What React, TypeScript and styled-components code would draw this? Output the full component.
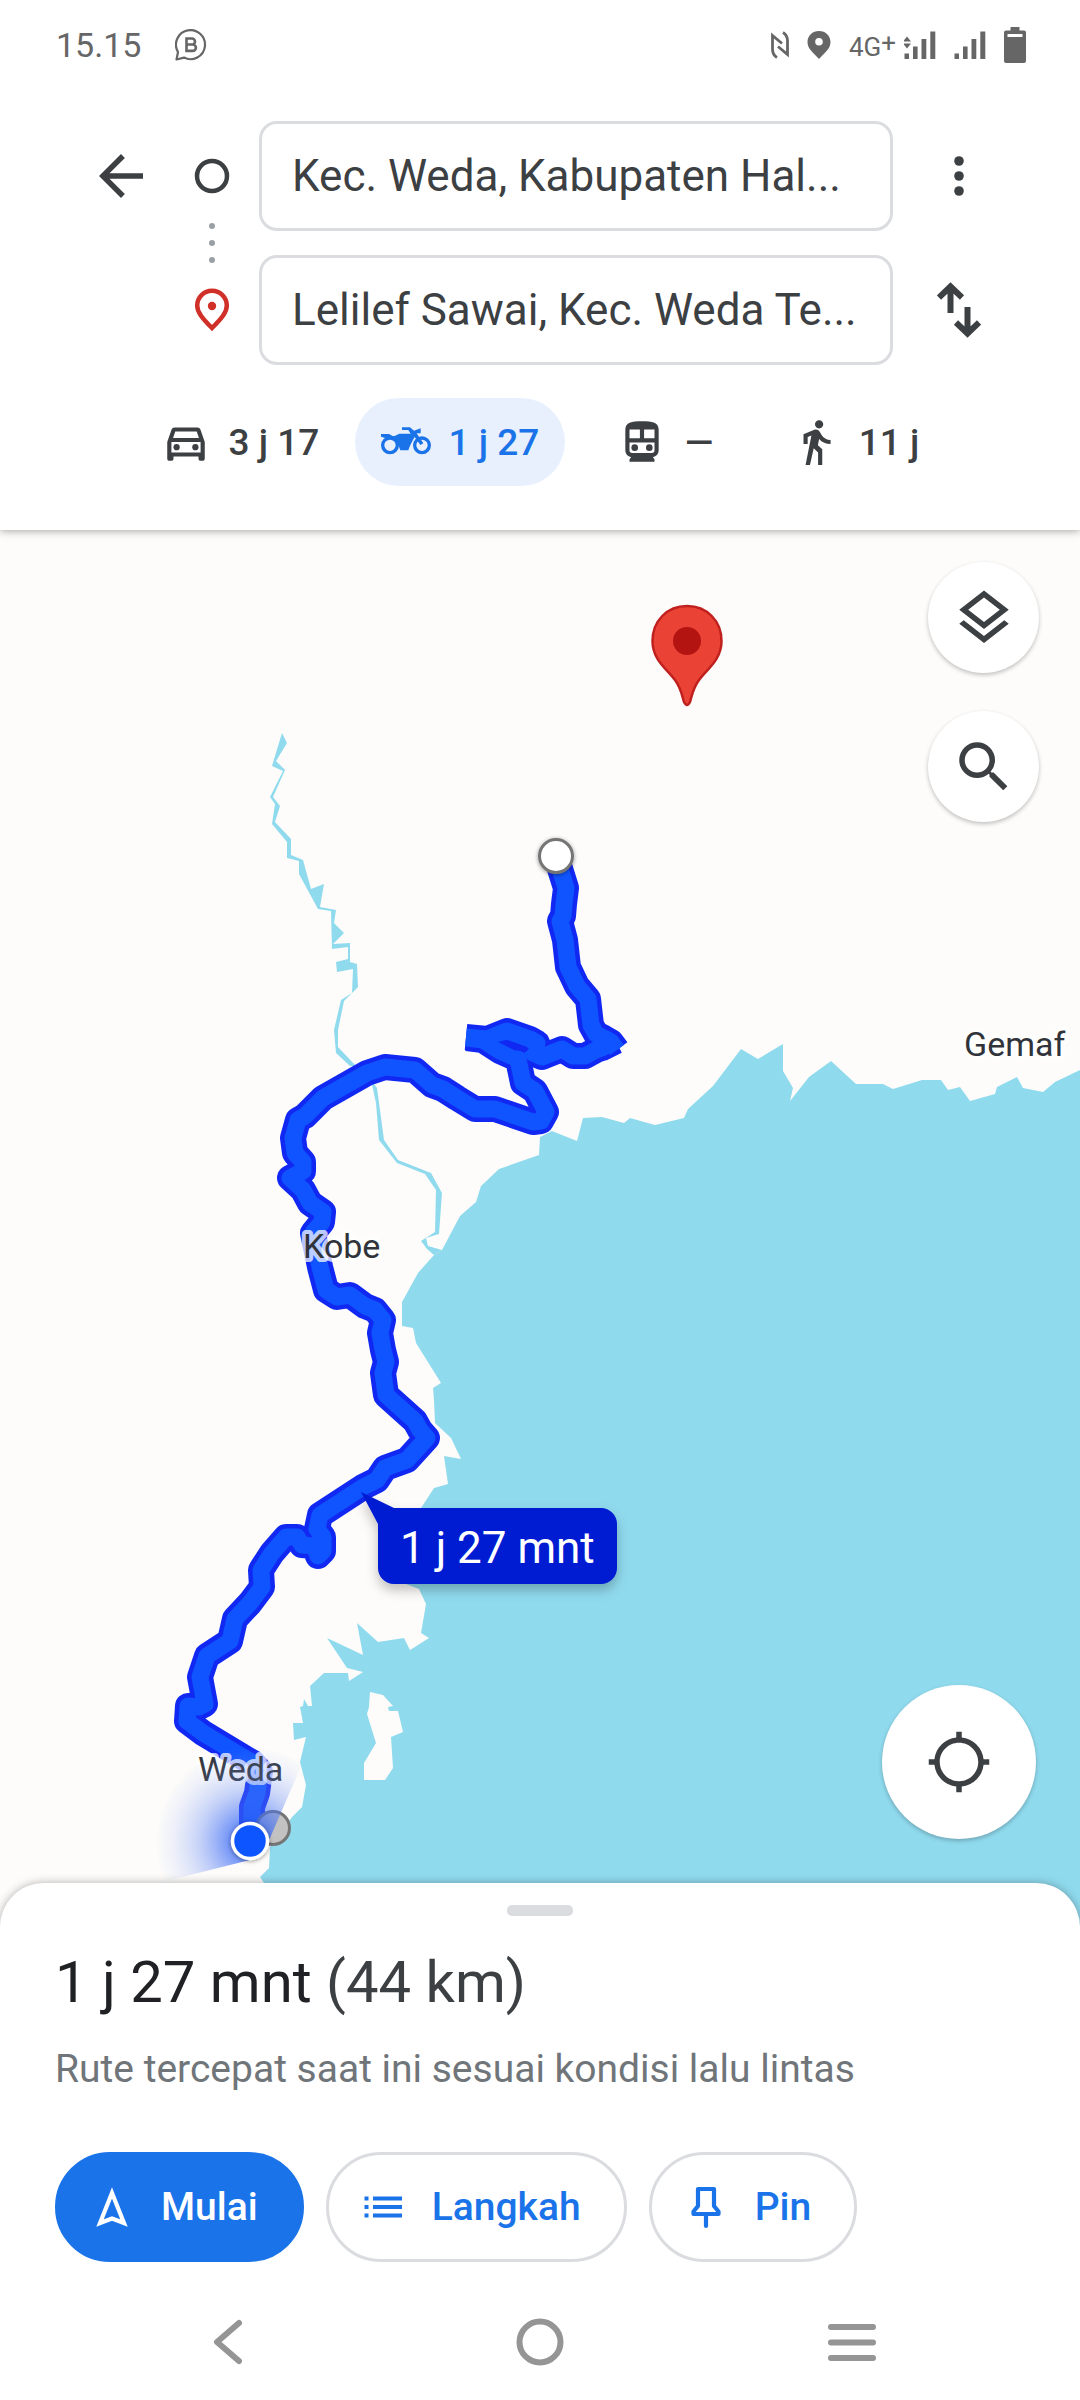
import React from "react";
import styled, { createGlobalStyle } from "styled-components";
import {
  MdArrowBack,
  MdDirectionsWalk,
  MdLocationSearching,
  MdOutlineDirectionsCar,
  MdOutlineLayers,
  MdSearch,
} from "react-icons/md";

const ink = "#3c4043";
const blue = "#1a73e8";
const line = "#dadce0";
const statusGray = "#666666";
const navGray = "#959595";
const sea = "#90daee";
const land = "#fdfcfa";

const GlobalStyle = createGlobalStyle`
  *, *::before, *::after { box-sizing: border-box; }
  html, body { margin: 0; }
  body { background: #fff; color: ${ink}; font-family: Roboto, "Liberation Sans", sans-serif; }
  button, input { font: inherit; color: inherit; margin: 0; }
  button { border: 0; padding: 0; background: none; cursor: pointer; }
  svg { display: block; flex: none; }
`;

const Screen = styled.div`
  display: flex;
  flex-direction: column;
  min-height: 100vh;
  background: #fff;
`;

/* Status bar */

const StatusBar = styled.div`
  display: flex;
  align-items: center;
  justify-content: space-between;
  height: 90px;
  padding: 0 54px 0 56px;
  color: ${statusGray};
`;

const StatusGroup = styled.div<{ $gap: number }>`
  display: flex;
  align-items: center;
  gap: ${(p) => p.$gap}px;
`;

const Clock = styled.time`
  font-size: 34px;
  line-height: 40px;
`;

const Network = styled.span`
  display: flex;
  align-items: center;
  gap: 8px;
  font-size: 26px;
  line-height: 32px;
`;

const Plus = styled.span`
  vertical-align: 4px;
`;

/* Directions header */

const Header = styled.header`
  position: relative;
  z-index: 1;
  background: #fff;
  box-shadow: 0 1px 8px rgba(0, 0, 0, 0.35);
`;

const RouteForm = styled.form`
  display: grid;
  grid-template-columns: 110px 72px minmax(0, 1fr) 132px;
  row-gap: 24px;
  align-items: center;
  padding: 31px 55px 33px 66px;
`;

const IconButton = styled.button`
  display: flex;
  align-items: center;
  justify-content: center;
  height: 110px;
`;

const Markers = styled.div`
  grid-row: 1 / span 2;
  grid-column: 2;
  display: flex;
  justify-content: center;
`;

const Field = styled.input`
  grid-column: 3;
  min-width: 0;
  height: 110px;
  margin-left: 11px;
  padding: 0 30px;
  border: 3px solid ${line};
  border-radius: 18px;
  background: #fff;
  font-size: 44px;
  text-overflow: ellipsis;
  outline: none;
`;

const Modes = styled.nav`
  display: flex;
  justify-content: center;
  gap: 10px;
  padding-bottom: 44px;
`;

const Mode = styled.button<{ $width: number }>`
  display: flex;
  align-items: center;
  justify-content: center;
  gap: 18px;
  width: ${(p) => p.$width}px;
  height: 88px;
  border-radius: 44px;
  font-size: 37px;
  font-weight: 500;
  &[aria-pressed="true"] {
    background: #e8f0fe;
    color: ${blue};
  }
`;

/* Map */

const MapArea = styled.main`
  position: relative;
  flex: 1 0 1000px;
  overflow: hidden;
  background: ${land};
`;

const MapDrawing = styled.svg`
  position: absolute;
  inset: 0;
  width: 100%;
  height: 100%;
`;

const PlaceName = styled.text`
  font-family: Roboto, "Liberation Sans", sans-serif;
  font-size: 34px;
  fill: #30343a;
  stroke: rgba(255, 255, 255, 0.72);
  stroke-width: 8px;
  stroke-linejoin: round;
  paint-order: stroke;
`;

const CalloutText = styled.text`
  font-family: Roboto, "Liberation Sans", sans-serif;
  font-size: 44px;
  fill: #fff;
`;

const TopTools = styled.div`
  position: absolute;
  top: 32px;
  right: 41px;
  display: flex;
  flex-direction: column;
  gap: 38px;
`;

const RoundButton = styled.button<{ $size: number }>`
  display: flex;
  align-items: center;
  justify-content: center;
  width: ${(p) => p.$size}px;
  height: ${(p) => p.$size}px;
  border-radius: 50%;
  background: #fff;
  box-shadow: 0 2px 4px rgba(0, 0, 0, 0.24);
`;

const LocateSlot = styled.div`
  position: absolute;
  right: 44px;
  bottom: 88px;
`;

/* Bottom sheet */

const Sheet = styled.section`
  position: relative;
  z-index: 1;
  margin-top: -44px;
  border-radius: 44px 44px 0 0;
  background: #fff;
  box-shadow: 0 0 10px rgba(0, 0, 0, 0.3);
`;

const SheetBody = styled.div`
  padding: 22px 55px;
`;

const Handle = styled.div`
  width: 66px;
  height: 11px;
  margin: 0 auto;
  border-radius: 5px;
  background: ${line};
`;

const Duration = styled.h1`
  margin: 30px 0 0;
  color: #202124;
  font-size: 58px;
  font-weight: 400;
  line-height: 72px;
`;

const Distance = styled.span`
  color: ${ink};
`;

const Note = styled.p`
  margin: 26px 0 58px;
  color: #70757a;
  font-size: 39px;
  line-height: 50px;
`;

const Actions = styled.div`
  display: flex;
  flex-wrap: wrap;
  gap: 22px;
`;

const Action = styled.button<{ $primary?: boolean }>`
  display: flex;
  align-items: center;
  gap: 27px;
  height: 110px;
  padding: 0 43px 0 32px;
  border: 3px solid ${(p) => (p.$primary ? blue : line)};
  border-radius: 55px;
  background: ${(p) => (p.$primary ? blue : "#fff")};
  color: ${(p) => (p.$primary ? "#fff" : blue)};
  font-size: 39px;
  font-weight: 500;
`;

const SystemNav = styled.nav`
  display: grid;
  grid-template-columns: repeat(3, 1fr);
  height: 116px;
  padding: 0 72px;
  color: ${navGray};
`;

const SystemButton = styled.button`
  display: flex;
  align-items: center;
  justify-content: center;
`;

/* Icons */

const ChatBadge = () => (
  <svg width="32" height="32" viewBox="0 0 32 32" fill="none" stroke="currentColor">
    <path d="M1.5 30.5 3 23A14.5 14.5 0 1 1 9 28.6Z" strokeWidth="2.2" strokeLinejoin="round" />
    <path d="M11.5 9.5h5.5a3 3 0 0 1 0 6h-5.500zM11.5 15.500h6.200a3.200 3.200 0 0 1 0 6.400h-6.200z" strokeWidth="2.6" />
  </svg>
);

const Nfc = () => (
  <svg width="18" height="28" viewBox="0 0 18 28" fill="none" stroke="currentColor" strokeWidth="2.8">
    <path d="M6 26.500C2.500 24.500 1.500 22 1.500 18V4.500l9.500 8M12 1.500c3.500 2 4.500 4.500 4.500 8.500v13.500l-9.500-8" />
  </svg>
);

const LocationPin = () => (
  <svg width="24" height="28" viewBox="0 0 24 28" fill="currentColor">
    <path
      fillRule="evenodd"
      d="M12 0C5.400 0 .5 4.800.5 11c0 6.500 5 10 11.500 17 6.500-7 11.500-10.500 11.500-17C23.500 4.800 18.600 0 12 0zm0 7a3.800 3.800 0 1 0 0 7.600A3.800 3.800 0 0 0 12 7z"
    />
  </svg>
);

const Bars = ({ data }: { data?: boolean }) => (
  <svg width="32" height="28" viewBox="0 0 32 28" fill="currentColor">
    <path d="M0.500 22.500h4.500V28H0.500zM9 15.500h4.600V28H9zM17.500 8h4.800v20h-4.800zM26.300 0.500h5V28h-5z" />
    {data && <path d="M-1 10.500 3 5.500 7 10.500zM-1 12.500 3 17.500 7 12.500z" />}
  </svg>
);

const Battery = () => (
  <svg width="22" height="36" viewBox="0 0 22 36" fill="currentColor">
    <path
      fillRule="evenodd"
      d="M6.500 0h9v3.500H20a2 2 0 0 1 2 2V34a2 2 0 0 1-2 2H2a2 2 0 0 1-2-2V5.500a2 2 0 0 1 2-2h4.500zM3.500 7v3h15V7z"
    />
  </svg>
);

const RouteMarkers = () => (
  <svg width="36" height="180" viewBox="0 0 36 180">
    <circle cx="18" cy="23" r="15" fill="none" stroke={ink} strokeWidth="4.500" />
    <g fill="#9aa0a6">
      <circle cx="18" cy="73" r="3" />
      <circle cx="18" cy="90" r="3" />
      <circle cx="18" cy="107" r="3" />
    </g>
    <path
      d="M18 175C8 165 3.200 159 3.200 152.500a14.800 14.800 0 0 1 29.600 0C32.800 159 28 165 18 175Z"
      fill="none"
      stroke="#d03027"
      strokeWidth="4.500"
    />
    <circle cx="18" cy="153" r="4.200" fill="#d03027" />
  </svg>
);

const Overflow = () => (
  <svg width="12" height="44" viewBox="0 0 12 44" fill="currentColor">
    <circle cx="6" cy="7" r="4.800" />
    <circle cx="6" cy="22" r="4.800" />
    <circle cx="6" cy="37" r="4.800" />
  </svg>
);

const Swap = () => (
  <svg width="44" height="56" viewBox="0 0 44 56" fill="none" stroke="currentColor" strokeWidth="6">
    <path d="M13.500 31V5M2 15.500 13.500 4.500 25 15.500M30.500 25v26M19 40.500l11.500 11L42 40.500" />
  </svg>
);

const Motorcycle = () => (
  <svg width="50" height="50" viewBox="0 -31 150 150">
    <g fill="none" stroke="currentColor" strokeWidth="10">
      <circle cx="27" cy="54" r="22" />
      <circle cx="123" cy="54" r="22" />
    </g>
    <path
      fill="currentColor"
      d="M0 20h24l11 6h6l14-7h34L82 8H63V0h24l12 10 20-7v15h-12l20 30-9 5-17-24c-7 12-13 22-19 40H58C52 50 42 33 22 31l-10 1-12-4z"
    />
  </svg>
);

const Subway = () => (
  <svg width="50" height="50" viewBox="0 0 24 24" fill="currentColor">
    <path
      fillRule="evenodd"
      d="M12 2c-5 0-8 .5-8 4v10c0 1.800 1.200 3 2.800 3.300L6 20.300V21.500h12v-1.200l-.8-1c1.600-.3 2.800-1.500 2.800-3.300V6c0-3.500-3-4-8-4zM6 6h5v4.200H6zM13 6h5v4.200h-5zM6 12.200h12V16a1.300 1.300 0 0 1-1.300 1.300H7.300A1.300 1.300 0 0 1 6 16z"
    />
    <circle cx="8.500" cy="14.700" r="1.600" />
    <circle cx="15.500" cy="14.700" r="1.600" />
  </svg>
);

const Navigate = () => (
  <svg width="44" height="44" viewBox="0 0 44 44" fill="none" stroke="currentColor" strokeWidth="4.200">
    <path d="M22 8 34 38 22 33.500 10 38Z" />
  </svg>
);

const Steps = () => (
  <svg width="44" height="44" viewBox="0 0 44 44" fill="currentColor">
    <path d="M3.500 11.500h4v4h-4zM3.500 20h4v4h-4zM3.500 28.500h4v4h-4zM12 11.500h29v4H12zM12 20h29v4H12zM12 28.500h29v4H12z" />
  </svg>
);

const Pushpin = () => (
  <svg width="44" height="44" viewBox="0 0 44 44" fill="none" stroke="currentColor" strokeWidth="4.200">
    <path d="M22 29v12" strokeLinecap="round" />
    <path d="M14 4h16v17l4.500 5.500V29h-25v-2.500L14 21z" strokeLinejoin="round" />
  </svg>
);

const BackChevron = () => (
  <svg width="34" height="48" viewBox="0 0 34 48" fill="none" stroke="currentColor" strokeWidth="6">
    <path d="M28 5 6 24l22 19" strokeLinecap="round" strokeLinejoin="round" />
  </svg>
);

const HomeCircle = () => (
  <svg width="48" height="48" viewBox="0 0 48 48" fill="none" stroke="currentColor" strokeWidth="6">
    <circle cx="24" cy="24" r="20.500" />
  </svg>
);

const RecentLines = () => (
  <svg width="50" height="40" viewBox="0 0 50 40" stroke="currentColor" strokeWidth="6">
    <path d="M4 5h42M4 20.500h42M4 36h42" strokeLinecap="round" />
  </svg>
);

/* Map geometry, in map units: one unit is one pixel on a 1080 wide screen */

const seaShape =
  "552,1131 577,1141 583,1118 602,1117 624,1123 630,1118 655,1125 684,1118 688,1109 713,1086 741,1049 758,1059 783,1044 783,1071 793,1088 790,1101 809,1077 831,1061 856,1084 883,1084 893,1089 922,1080 941,1080 948,1090 960,1087 970,1101 995,1094 997,1087 1017,1077 1023,1088 1043,1092 1055,1082 1080,1070 1080,1940 264,1940 264,1883 260,1877 269,1868 270,1847 292,1817 302,1807 306,1785 300,1762 306,1737 294,1740 293,1723 303,1723 300,1707 303,1706 304,1699 308,1706 312,1706 310,1686 324,1673 348,1673 349,1681 363,1672 347,1668 327,1638 363,1655 357,1623 378,1642 404,1638 410,1650 429,1638 421,1633 426,1604 419,1589 406,1584 396,1570 400,1530 421,1508 434,1488 448,1484 444,1456 461,1459 451,1438 435,1423 434,1400 433,1388 441,1383 416,1343 413,1328 402,1326 402,1302 418,1273 434,1255 442,1250 460,1216 476,1202 481,1186 499,1169 539,1155 540,1137";

const islandShape =
  "370,1692 383,1695 393,1706 388,1707 389,1711 398,1711 403,1732 391,1737 393,1768 385,1780 364,1780 364,1763 376,1743 367,1714 369,1707";

const upperRiver =
  "282,733 287,743 276,761 285,770 273,797 280,806 275,822 291,839 291,855 303,860 311,889 324,884 320,907 336,910 334,923 344,933 333,944 350,943 350,962 357,964 358,987 352,993 344,1001 338,1030 338,1047 356,1066 350,1066 336,1053 334,1030 341,1000 352,993 353,969 337,972 336,962 348,959 348,947 332,949 331,911 318,909 299,874 299,861 287,858 287,842 272,824 275,804 270,797 283,771 272,766";

const lowerRiver =
  "371,1080 377,1088 384,1140 398,1160 431,1173 442,1193 439,1234 426,1238 428,1246 442,1250 434,1255 427,1249 421,1241 435,1232 436,1190 425,1174 397,1163 379,1140 376,1103";

const routeLegs = [
  "556,856 566,888 564,904 563,916 560,921 565,940 568,967 577,986 588,999 591,1025 596,1034 604,1038 611,1042 617,1050",
  "616,1041 602,1048 596,1050 585,1056 573,1056 562,1049 542,1057 533,1053 537,1043 530,1039 507,1031 487,1039 466,1037",
  "467,1038 483,1040 500,1051 518,1059 523,1083 535,1091 546,1112 541,1121 533,1122 495,1109 475,1109 457,1098 443,1089 432,1085 415,1070 385,1067 367,1073 323,1098 305,1116 298,1120 293,1138 295,1153 303,1162 303,1171 290,1178 303,1190 310,1203 323,1212 322,1222 313,1233 320,1267 326,1290 337,1297 350,1295 365,1306 375,1310 383,1320 380,1333 383,1350 386,1362 383,1373 386,1395 415,1421 420,1430 427,1438 407,1460 385,1468 377,1480 363,1487 320,1515 317,1529 323,1537 323,1551 318,1556 314,1546 302,1545 297,1537 286,1537 272,1553 261,1570 262,1587 250,1603 235,1619 230,1641 207,1656 200,1677 205,1704 199,1707 188,1706 187,1721 203,1733 253,1763 260,1771 257,1793 252,1807 252,1827 250,1842",
];

const RouteMap = () => (
  <MapDrawing viewBox="0 530 1080 1397" preserveAspectRatio="xMidYMid slice">
    <defs>
      <radialGradient id="beam" gradientUnits="userSpaceOnUse" cx="250" cy="1841" r="93">
        <stop offset="0.2" stopColor="#2f62f6" stopOpacity="0.7" />
        <stop offset="0.55" stopColor="#5c82f4" stopOpacity="0.34" />
        <stop offset="0.85" stopColor="#8fa8f6" stopOpacity="0.12" />
        <stop offset="1" stopColor="#8fa8f6" stopOpacity="0.02" />
      </radialGradient>
      <filter id="soft" x="-30%" y="-30%" width="160%" height="180%">
        <feDropShadow dx="0" dy="6" stdDeviation="6" floodOpacity="0.25" />
      </filter>
      <filter id="near" x="-50%" y="-50%" width="200%" height="200%">
        <feDropShadow dx="0" dy="1" stdDeviation="2" floodOpacity="0.4" />
      </filter>
    </defs>

    <polygon points={seaShape} fill={sea} />
    <polygon points={islandShape} fill={land} />
    <polygon points={upperRiver} fill={sea} />
    <polygon points={lowerRiver} fill={sea} />

    <g fill="none" strokeLinejoin="round">
      {routeLegs.map((leg) => (
        <polyline key={leg} points={leg} stroke="#1128f2" strokeWidth="26" />
      ))}
      {routeLegs.map((leg) => (
        <polyline key={leg} points={leg} stroke="#0f54ff" strokeWidth="17" />
      ))}
    </g>
    <path d="M498 1042 506 1040 529 1048 526 1052 514 1050Z" fill="#1128f2" />

    <circle cx="556" cy="856" r="16.500" fill="#fff" stroke="#757575" strokeWidth="3" filter="url(#near)" />
    <path
      d="M687 606C707 606 721.500 621 721.500 641C721.500 660 707 669 699 680C693 688 692 695 690 702Q687 708 684 702C682 695 681 688 675 680C667 669 652.500 660 652.500 641C652.500 621 667 606 687 606Z"
      fill="#ea4335"
      stroke="#c0211e"
      strokeWidth="2.500"
    />
    <circle cx="687" cy="641" r="14" fill="#b31412" />

    <PlaceName x="964" y="1056">Gemaf</PlaceName>
    <PlaceName x="303" y="1258">Kobe</PlaceName>
    <PlaceName x="198" y="1781">Weda</PlaceName>

    <circle cx="273" cy="1828" r="16.500" fill="#c2c2c2" stroke="#757575" strokeWidth="3" />
    <path d="M250 1860 166 1881A93 93 0 0 1 302 1764L270 1838Z" fill="url(#beam)" />
    <circle cx="250" cy="1841" r="17.500" fill="#0f54ff" stroke="#fff" strokeWidth="3.500" filter="url(#near)" />

    <path
      d="M361 1492 394 1508H601A16 16 0 0 1 617 1524V1568A16 16 0 0 1 601 1584H394A16 16 0 0 1 378 1568V1524Z"
      fill="#041bd3"
      filter="url(#soft)"
    />
    <CalloutText x="400" y="1563">1 j 27 mnt</CalloutText>
  </MapDrawing>
);

const modes = [
  { name: "Mobil", label: "3 j 17", width: 210, icon: <MdOutlineDirectionsCar size={50} /> },
  { name: "Motor", label: "1 j 27", width: 210, icon: <Motorcycle /> },
  { name: "Transportasi umum", label: "—", width: 180, icon: <Subway /> },
  { name: "Jalan kaki", label: "11 j", width: 180, icon: <MdDirectionsWalk size={50} /> },
];

export default function App() {
  const [mode, setMode] = React.useState("Motor");

  return (
    <Screen>
      <GlobalStyle />
      <Header>
        <StatusBar>
          <StatusGroup $gap={34}>
            <Clock>15.15</Clock>
            <ChatBadge />
          </StatusGroup>
          <StatusGroup $gap={18}>
            <Nfc />
            <LocationPin />
            <Network>
              <span>
                4G<Plus>+</Plus>
              </span>
              <Bars data />
            </Network>
            <Bars />
            <Battery />
          </StatusGroup>
        </StatusBar>

        <RouteForm onSubmit={(e) => e.preventDefault()}>
          <IconButton type="button" aria-label="Kembali">
            <MdArrowBack size={66} />
          </IconButton>
          <Markers>
            <RouteMarkers />
          </Markers>
          <Field aria-label="Titik awal" defaultValue="Kec. Weda, Kabupaten Hal..." />
          <IconButton type="button" aria-label="Opsi lainnya">
            <Overflow />
          </IconButton>
          <Field aria-label="Tujuan" defaultValue="Lelilef Sawai, Kec. Weda Te..." />
          <IconButton type="button" aria-label="Tukar titik awal dan tujuan">
            <Swap />
          </IconButton>
        </RouteForm>

        <Modes aria-label="Moda transportasi">
          {modes.map((m) => (
            <Mode
              key={m.name}
              type="button"
              title={m.name}
              $width={m.width}
              aria-pressed={mode === m.name}
              onClick={() => setMode(m.name)}
            >
              {m.icon}
              {m.label}
            </Mode>
          ))}
        </Modes>
      </Header>

      <MapArea>
        <RouteMap />
        <TopTools>
          <RoundButton type="button" $size={111} aria-label="Lapisan peta">
            <MdOutlineLayers size={66} color={ink} />
          </RoundButton>
          <RoundButton type="button" $size={111} aria-label="Telusuri">
            <MdSearch size={66} color={ink} />
          </RoundButton>
        </TopTools>
        <LocateSlot>
          <RoundButton type="button" $size={154} aria-label="Lokasi saya">
            <MdLocationSearching size={66} color={ink} />
          </RoundButton>
        </LocateSlot>
      </MapArea>

      <Sheet>
        <SheetBody>
          <Handle />
          <Duration>
            1 j 27 mnt <Distance>(44 km)</Distance>
          </Duration>
          <Note>Rute tercepat saat ini sesuai kondisi lalu lintas</Note>
          <Actions>
            <Action type="button" $primary>
              <Navigate />
              Mulai
            </Action>
            <Action type="button">
              <Steps />
              Langkah
            </Action>
            <Action type="button">
              <Pushpin />
              Pin
            </Action>
          </Actions>
        </SheetBody>

        <SystemNav aria-label="Navigasi sistem">
          <SystemButton type="button" aria-label="Kembali">
            <BackChevron />
          </SystemButton>
          <SystemButton type="button" aria-label="Beranda">
            <HomeCircle />
          </SystemButton>
          <SystemButton type="button" aria-label="Aplikasi terbaru">
            <RecentLines />
          </SystemButton>
        </SystemNav>
      </Sheet>
    </Screen>
  );
}
